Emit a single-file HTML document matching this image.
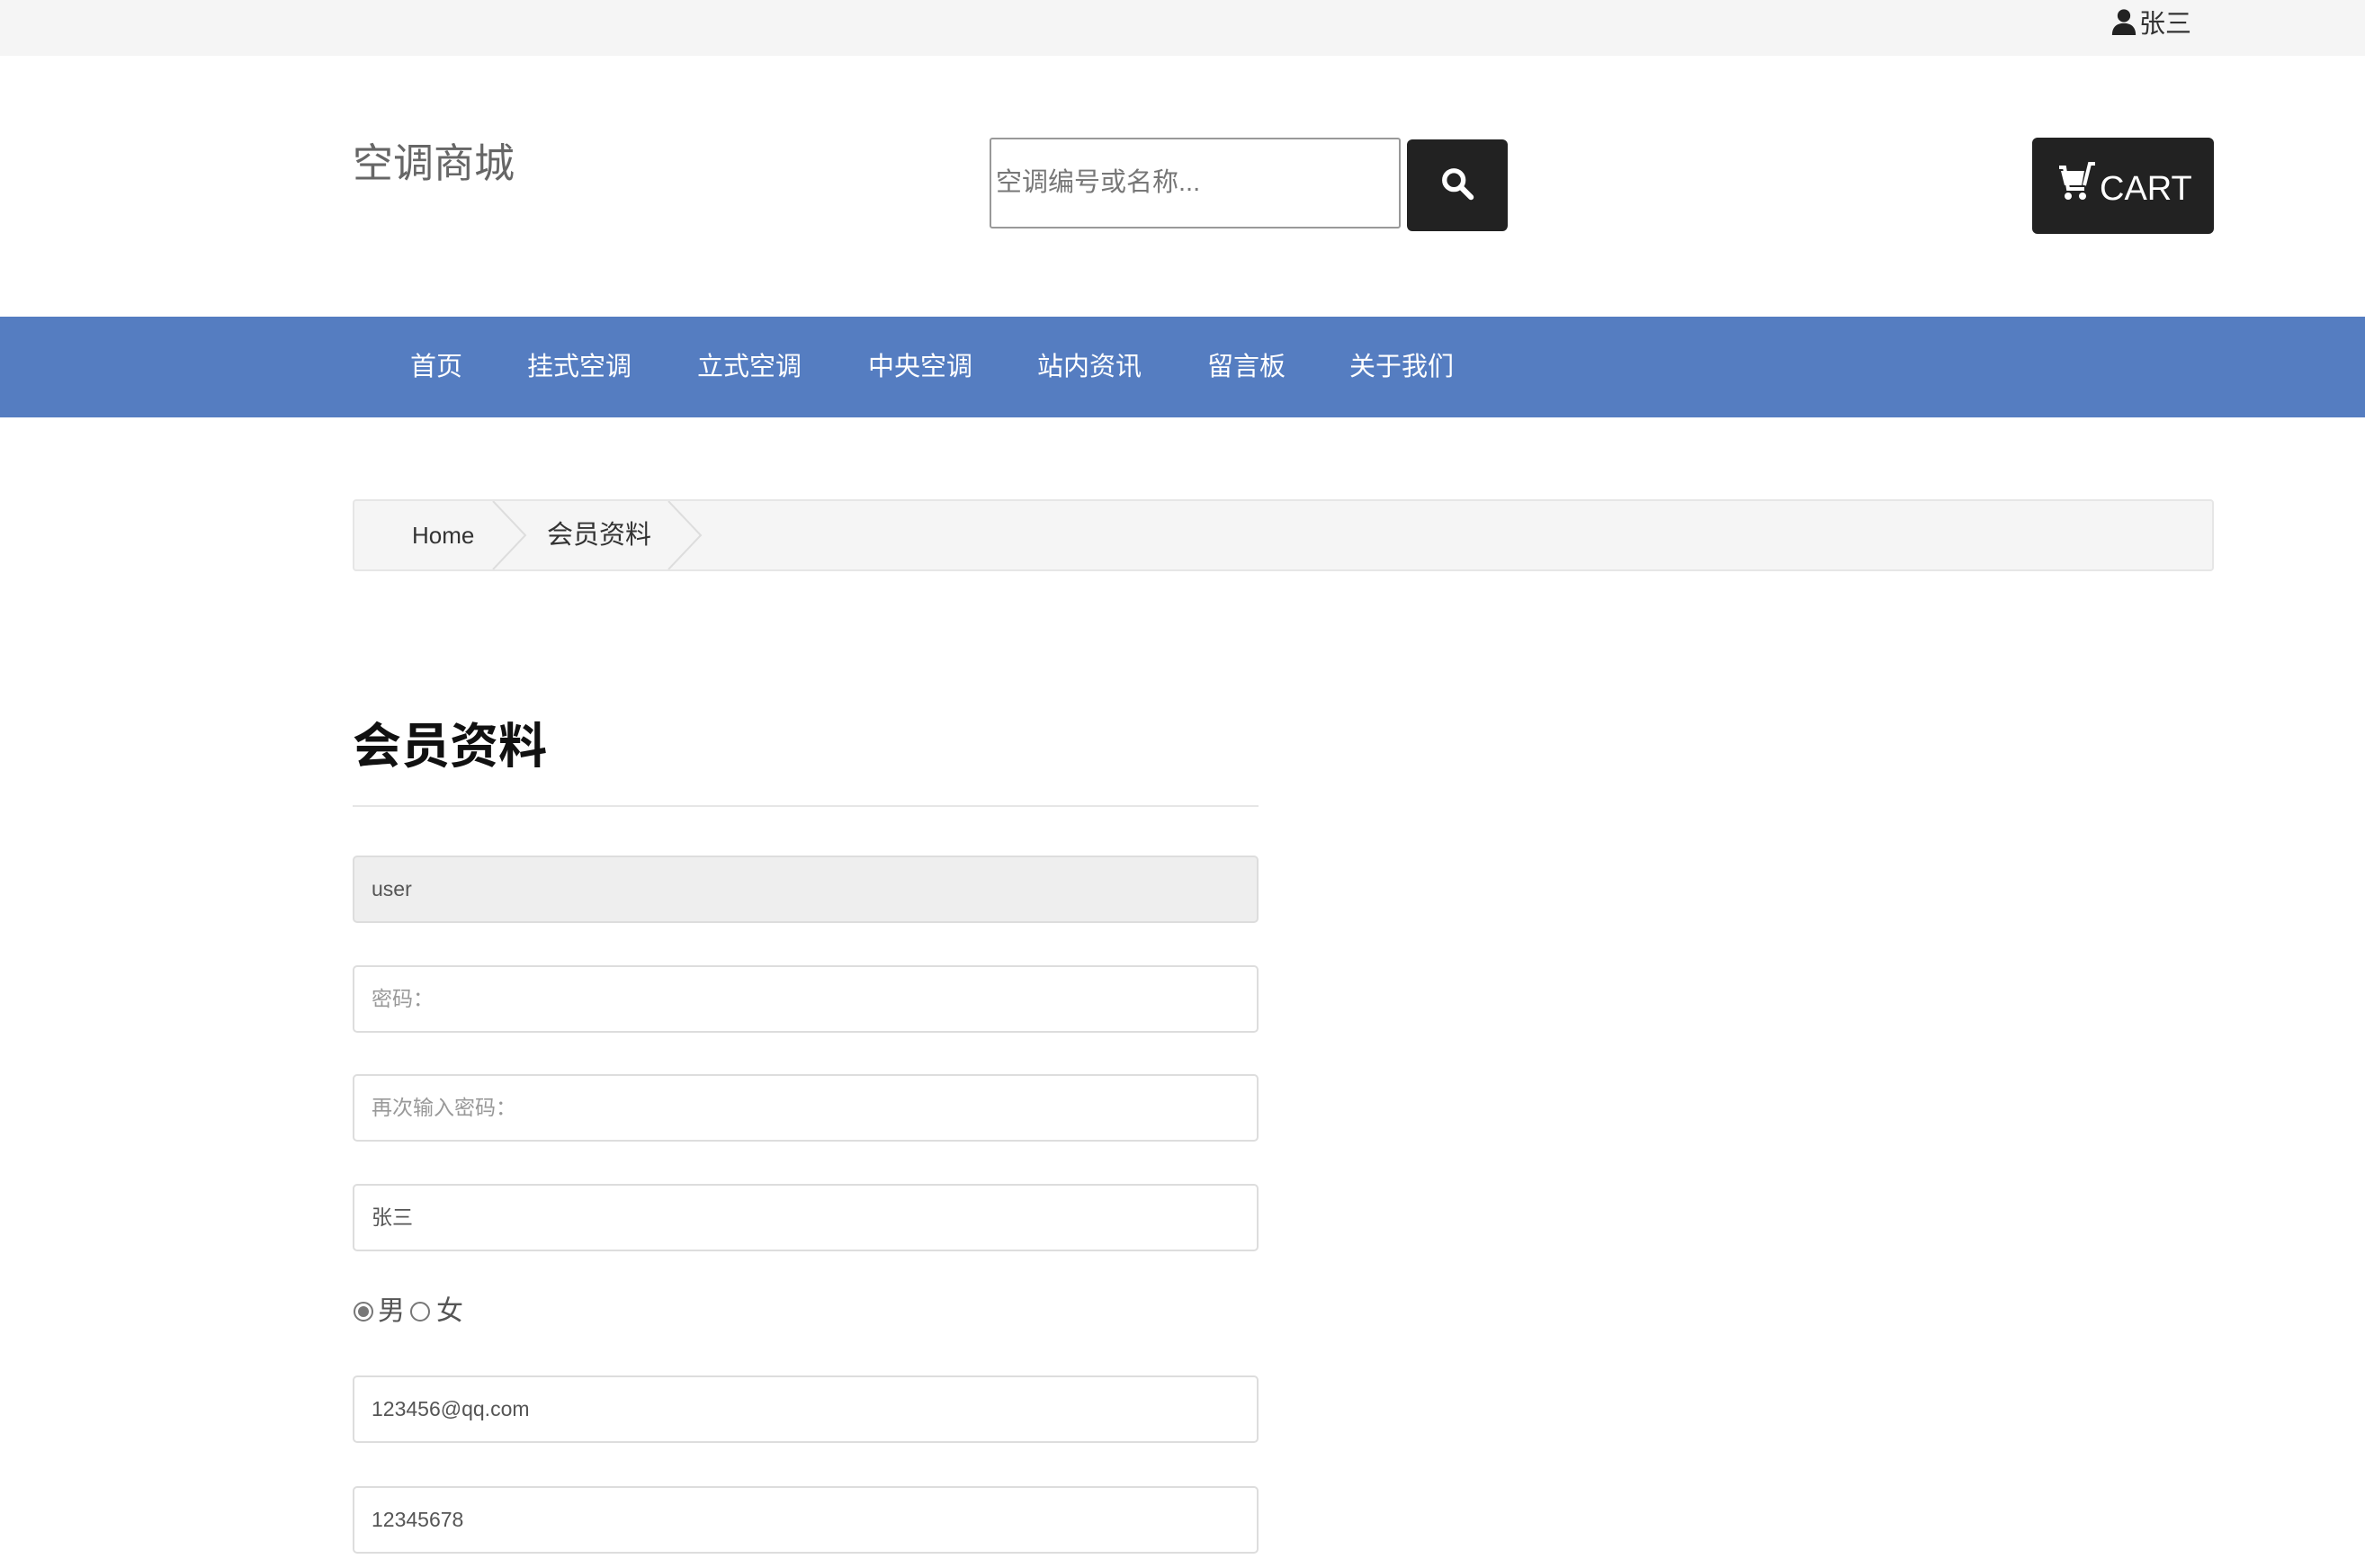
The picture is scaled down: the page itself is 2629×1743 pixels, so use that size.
<!DOCTYPE html>
<html><head><meta charset="utf-8"><style>
*{box-sizing:border-box;margin:0;padding:0}
body{width:2629px;height:1743px;overflow:hidden;background:#fff;font-family:"Liberation Sans","Noto Sans CJK SC",sans-serif;position:relative;color:#333}
.a{position:absolute}
.top{left:0;top:0;width:2629px;height:62px;background:#f5f5f5}
.nav{left:0;top:352px;width:2629px;height:112px;background:#557dc1}
.nav span{position:absolute;top:0;line-height:112px;color:#fff;font-size:29px}
.inp{left:392px;width:1007px;height:75px;border:2px solid #ddd;border-radius:5px;background:#fff;font-size:23px;line-height:71px;padding-left:19px;color:#555}
</style></head><body>
<div class="a top"></div>
<div class="a" style="left:2346px;top:4px;height:40px;display:flex;align-items:center;font-size:29px;color:#333">
<svg width="30" height="30" viewBox="0 0 16 16"><circle cx="8" cy="4.5" r="3.8" fill="#222"/><path d="M1 16c0-5 3-7 7-7s7 2 7 7z" fill="#222"/></svg><span style="margin-left:2px">张三</span></div>
<div class="a" style="left:392px;top:152px;font-size:45px;color:#666;line-height:60px">空调商城</div>
<div class="a" style="left:1100px;top:153px;width:457px;height:101px;border:2px solid #999;border-radius:3px;font-size:29px;color:#777;line-height:97px;padding-left:5px">空调编号或名称...</div>
<div class="a" style="left:1564px;top:155px;width:112px;height:102px;background:#222;border-radius:6px">
<svg class="a" style="left:37px;top:30px" width="38" height="38" viewBox="0 0 20 20"><circle cx="8" cy="8" r="5.5" fill="none" stroke="#fff" stroke-width="2.8"/><path d="M12 12l6 6" stroke="#fff" stroke-width="3.2" stroke-linecap="round"/></svg></div>
<div class="a" style="left:2259px;top:153px;width:202px;height:107px;background:#222;border-radius:6px;color:#fff">
<svg class="a" style="left:27px;top:25px" width="46" height="50" viewBox="0 0 22 25"><path d="M2 6h13l-1.5 8H4z" fill="#fff"/><path d="M1 4h3l2 12h9" fill="none" stroke="#fff" stroke-width="2"/><path d="M15 14l3-12h3" fill="none" stroke="#fff" stroke-width="2"/><circle cx="6" cy="20" r="2" fill="#fff"/><circle cx="14" cy="20" r="2" fill="#fff"/></svg>
<span class="a" style="left:75px;top:29px;font-size:38px;line-height:56px">CART</span></div>
<div class="a nav">
<span style="left:456px">首页</span><span style="left:586px">挂式空调</span><span style="left:775px">立式空调</span><span style="left:965px">中央空调</span><span style="left:1153px">站内资讯</span><span style="left:1342px">留言板</span><span style="left:1500px">关于我们</span></div>
<div class="a" style="left:392px;top:555px;width:2069px;height:80px;background:#f5f5f5;border:2px solid #e6e6e6;border-radius:4px"></div>
<svg class="a" style="left:540px;top:557px" width="260" height="76"><path d="M8 0l36 38-36 38M203 0l36 38-36 38" fill="none" stroke="#ddd" stroke-width="2"/></svg>
<div class="a" style="left:458px;top:575px;font-size:26px;line-height:40px;color:#333">Home</div>
<div class="a" style="left:608px;top:575px;font-size:29px;line-height:40px;color:#333">会员资料</div>
<div class="a" style="left:392px;top:792px;font-size:54px;font-weight:bold;color:#111;line-height:76px">会员资料</div>
<div class="a" style="left:392px;top:895px;width:1007px;height:2px;background:#e6e6e6"></div>
<div class="a inp" style="top:951px;background:#eee">user</div>
<div class="a inp" style="top:1073px;color:#999">密码：</div>
<div class="a inp" style="top:1194px;color:#999">再次输入密码：</div>
<div class="a inp" style="top:1316px">张三</div>
<div class="a" style="left:392px;top:1437px;font-size:30px;line-height:42px;color:#555;display:flex;align-items:center">
<svg width="24" height="24"><circle cx="12" cy="12" r="10" fill="#fff" stroke="#777" stroke-width="2"/><circle cx="12" cy="12" r="6" fill="#777"/></svg><span style="margin:0 5px 0 4px">男</span>
<svg width="24" height="24"><circle cx="12" cy="12" r="10" fill="#fff" stroke="#777" stroke-width="2"/></svg><span style="margin-left:6px">女</span></div>
<div class="a inp" style="top:1529px">123456@qq.com</div>
<div class="a inp" style="top:1652px">12345678</div>
</body></html>
